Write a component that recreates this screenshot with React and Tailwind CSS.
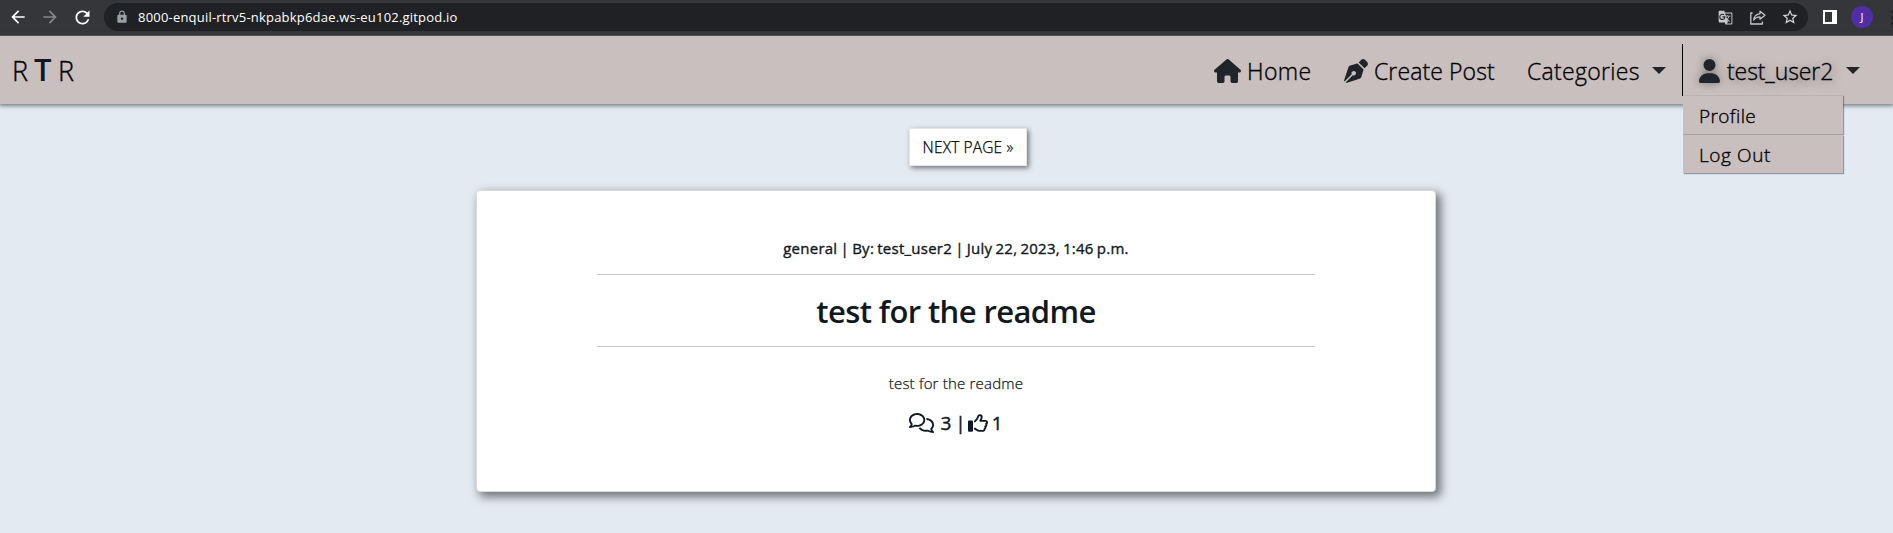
import React from "react";
import { FaHouse, FaPenNib, FaUser, FaRegComments, FaRegThumbsUp } from "react-icons/fa6";
import { MdArrowBack, MdArrowForward, MdRefresh, MdLock, MdStarBorder, MdGTranslate } from "react-icons/md";

function ShareIcon() {
  return (
    <svg width="16" height="15" viewBox="0 0 16 15" fill="none" stroke="#c4c7cb" strokeWidth="1.3" strokeLinejoin="round">
      <path d="M2.6 3H.8v11h11.6v-2.6" />
      <path d="M10 1.2l5 4-5 4V6.800c-3 0-5 1-6.400 3.200.400-3.400 2.400-5.800 6.400-6.400z" />
    </svg>
  );
}

function Caret() {
  return (
    <svg width="14" height="7" viewBox="0 0 14 7" className="shrink-0">
      <path d="M0 0h14L7 7z" fill="#212529" />
    </svg>
  );
}

function BrowserBar() {
  return (
    <div className="flex h-9 items-start overflow-hidden border-b border-[#505154] bg-[#35363a]">
      <div className="flex h-[34px] w-[104px] shrink-0 items-center pl-2">
        <MdArrowBack size={20} color="#fff" />
        <MdArrowForward size={20} color="#86888b" className="ml-3" />
        <MdRefresh size={21} color="#fff" className="ml-[12px]" />
      </div>
      <div className="mt-[3px] flex h-7 w-[1704px] shrink-0 items-center rounded-full bg-[#202124] pl-[11px] pr-[9px]">
        <MdLock size={14} color="#9aa0a6" />
        <span className="ml-[9px] whitespace-nowrap text-[13px] leading-7 tracking-[0.2px] text-white">8000-enquil-rtrv5-nkpabkp6dae.ws-eu102.gitpod.io</span>
        <div className="ml-auto flex items-center">
          <MdGTranslate size={15} color="#c4c7cb" />
          <span className="ml-[17px]"><ShareIcon /></span>
          <MdStarBorder size={18} color="#d5d7da" className="ml-[15px]" />
        </div>
      </div>
      <div className="ml-[15px] mt-[10px] h-[14px] w-[14px] shrink-0 border-2 border-r-[5px] border-white" />
      <div className="ml-[14px] mt-[6px] flex h-[22px] w-[22px] shrink-0 items-center justify-center rounded-full bg-[#512da8] text-[11px] text-white">J</div>
      <div className="ml-[18px] mt-[10px] flex shrink-0 flex-col gap-[3px]">
        <i className="h-[3px] w-[3px] rounded-full bg-[#202124]" />
        <i className="h-[3px] w-[3px] rounded-full bg-[#202124]" />
        <i className="h-[3px] w-[3px] rounded-full bg-[#202124]" />
      </div>
    </div>
  );
}

function Navbar() {
  return (
    <nav className="relative z-10 flex h-[68px] items-start bg-[#c9bfbf] text-[23px] font-light text-black shadow-[0_1px_4px_1px_rgba(60,75,75,0.65)] [-webkit-text-stroke:0.35px_black]">
      <div className="flex h-[68px] items-baseline pl-[12px] pt-[11px] leading-[44px]">
        <span className="w-[22px] text-[27px]">R</span>
        <span className="w-[24px] text-[31px] font-semibold text-[#101820] [-webkit-text-stroke:0px]">T</span>
        <span className="text-[27px]">R</span>
      </div>
      <div className="ml-auto flex h-[60px] pt-2 leading-[54px] whitespace-nowrap">
        <a className="flex w-[130px] items-start">
          <FaHouse size={24} color="#212529" className="mt-[15px] h-6 w-[27px]" />
          <span className="ml-[6px] tracking-[0.4px]">Home</span>
        </a>
        <a className="flex w-[183px] items-start">
          <FaPenNib size={24} color="#212529" className="mt-[15px]" />
          <span className="ml-[6px] tracking-[0.1px]">Create Post</span>
        </a>
        <a className="flex w-[155px] items-start">
          <span className="w-[125px] tracking-[0.3px]">Categories</span>
          <span className="mt-[23px] flex"><Caret /></span>
        </a>
        <div className="relative h-[52px] w-[211px] border-l border-black">
          <a className="flex items-start pl-4 [text-shadow:2px_2px_10px_rgba(0,0,0,0.5)]">
            <FaUser size={24} color="#212529" className="mt-[15px] h-6 w-[21px] drop-shadow-[0_0_5px_rgba(0,0,0,0.4)]" />
            <span className="ml-[7px] w-[119px] tracking-[-0.1px]">test_user2</span>
            <span className="mt-[23px] flex"><Caret /></span>
          </a>
          <div className="absolute left-0 top-[52px] w-[160px] text-[19px] leading-[41px]">
            <div className="h-[39px] border-b border-[#a3a5a3] bg-[#c9bfbf] pl-[16px] tracking-[0.4px] shadow-[1px_0_1px_rgba(60,75,75,0.5)]">Profile</div>
            <div className="h-[38px] bg-[#c9bfbf] pl-[16px] tracking-[0.6px] shadow-[1px_1px_1px_rgba(60,75,75,0.5)]">Log Out</div>
          </div>
        </div>
      </div>
    </nav>
  );
}

function PostCard() {
  return (
    <article className="ml-[476px] mt-6 flex h-[302px] w-[960px] flex-col items-center rounded-[4px] border border-[#d8dadb] bg-white text-[#101820] shadow-[4px_4px_10px_1px_rgba(0,0,0,0.5)]">
      <div className="mt-[46px] h-[38px] w-[718px] border-b border-[#c5c6c7] text-center text-[15px] leading-[23px] font-normal tracking-[0.25px] [word-spacing:-1px] [-webkit-text-stroke:0.35px]">
        general | By: test_user2 | July 22, 2023, 1:46 p.m.
      </div>
      <h2 className="h-[72px] w-[718px] border-b border-[#c5c6c7] text-center text-[31px] leading-[73px] font-semibold tracking-[-0.6px]">test for the readme</h2>
      <p className="mt-6 text-[15px] leading-6 font-light tracking-[0.2px] [-webkit-text-stroke:0.25px]">test for the readme</p>
      <div className="mt-[16px] flex h-6 items-center text-[19px] leading-6 font-normal">
        <FaRegComments size={20} className="h-5 w-[25px]" />
        <span className="ml-[6px] [word-spacing:-1px] [-webkit-text-stroke:0.4px]">3 |</span>
        <FaRegThumbsUp size={20} className="ml-[2px]" />
        <span className="ml-[4px] [-webkit-text-stroke:0.4px]">1</span>
      </div>
    </article>
  );
}

export default function App() {
  return (
    <div className="h-[533px] w-[1893px] overflow-hidden bg-[#e3eaf2] font-['Open_Sans','Noto_Sans',sans-serif]">
      <BrowserBar />
      <Navbar />
      <main>
        <a className="ml-[909px] mt-[24px] block h-[38px] w-[118px] border border-[#e4e6e8] bg-white text-center text-[15.5px] leading-[37px] font-light tracking-[0.15px] whitespace-nowrap shadow-[2px_2px_5px_rgba(0,0,0,0.5)] [-webkit-text-stroke:0.25px]">NEXT PAGE »</a>
        <PostCard />
      </main>
    </div>
  );
}
